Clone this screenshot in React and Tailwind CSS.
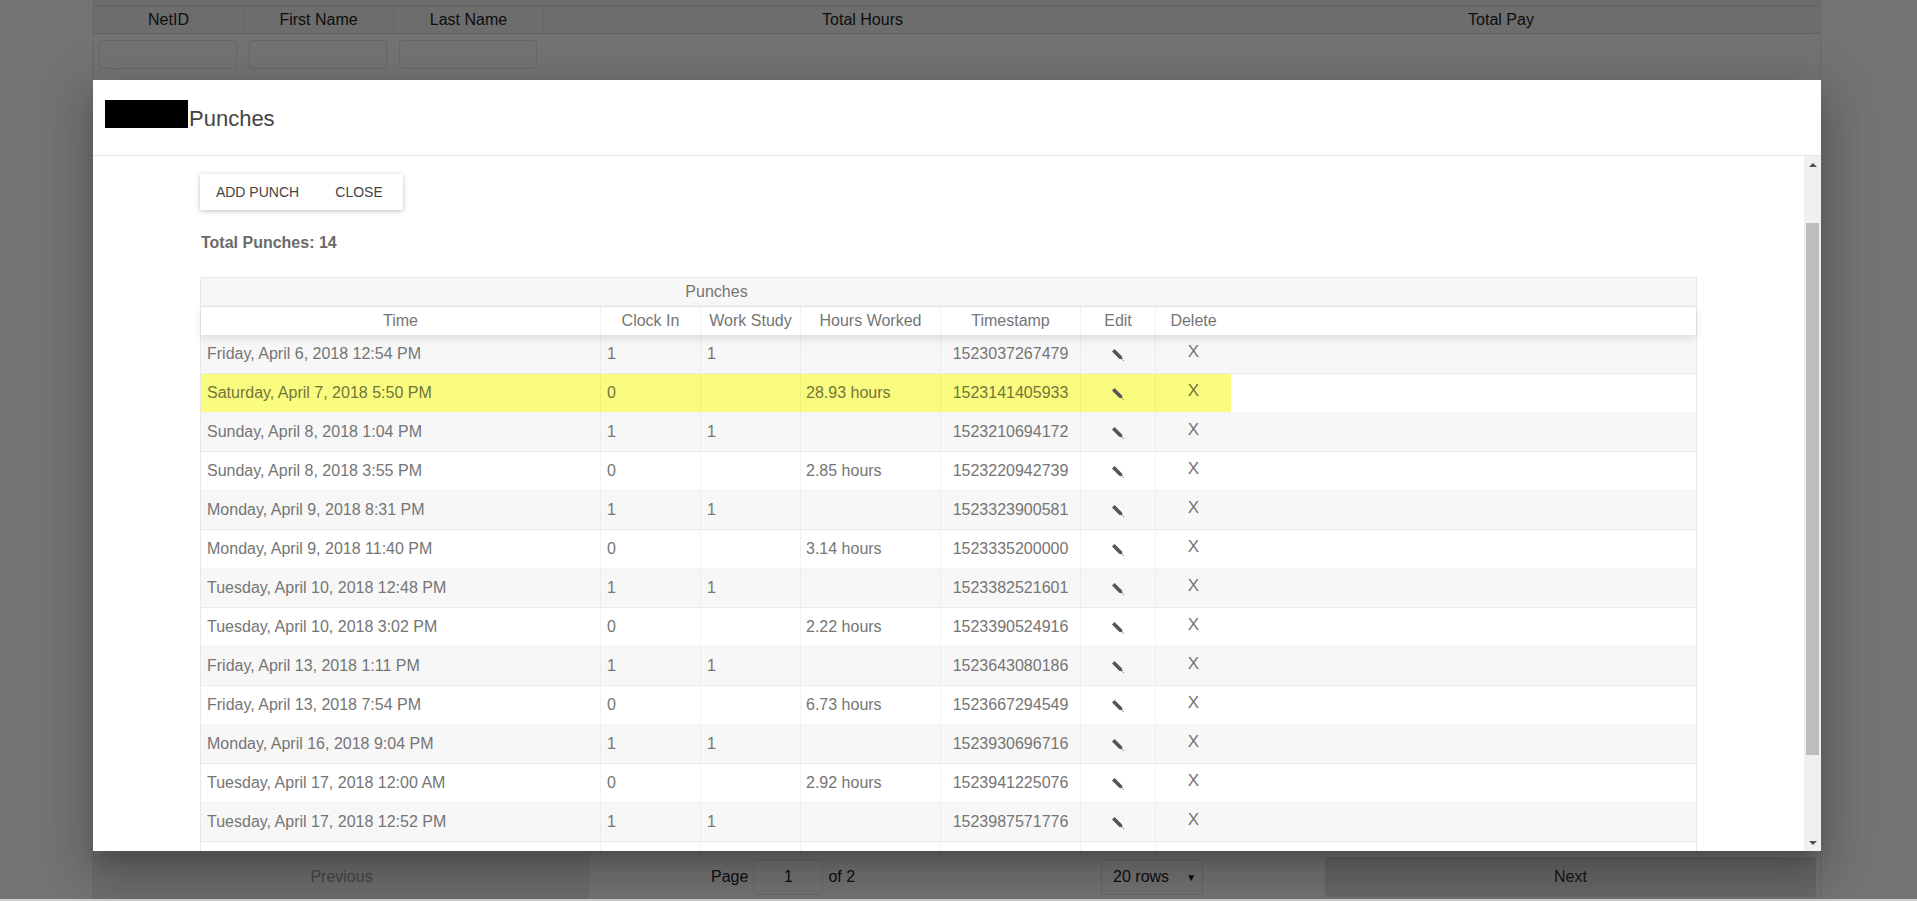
const F = "font-['Liberation_Sans',Arial,sans-serif]";

const rows = [
  ['Friday, April 6, 2018 12:54 PM', '1', '1', '', '1523037267479'],
  ['Saturday, April 7, 2018 5:50 PM', '0', '', '28.93 hours', '1523141405933'],
  ['Sunday, April 8, 2018 1:04 PM', '1', '1', '', '1523210694172'],
  ['Sunday, April 8, 2018 3:55 PM', '0', '', '2.85 hours', '1523220942739'],
  ['Monday, April 9, 2018 8:31 PM', '1', '1', '', '1523323900581'],
  ['Monday, April 9, 2018 11:40 PM', '0', '', '3.14 hours', '1523335200000'],
  ['Tuesday, April 10, 2018 12:48 PM', '1', '1', '', '1523382521601'],
  ['Tuesday, April 10, 2018 3:02 PM', '0', '', '2.22 hours', '1523390524916'],
  ['Friday, April 13, 2018 1:11 PM', '1', '1', '', '1523643080186'],
  ['Friday, April 13, 2018 7:54 PM', '0', '', '6.73 hours', '1523667294549'],
  ['Monday, April 16, 2018 9:04 PM', '1', '1', '', '1523930696716'],
  ['Tuesday, April 17, 2018 12:00 AM', '0', '', '2.92 hours', '1523941225076'],
  ['Tuesday, April 17, 2018 12:52 PM', '1', '1', '', '1523987571776'],
];

const Pencil = () => (
  <svg width="14" height="14" viewBox="0 0 14 14" className="mt-[1px]">
    <path d="M1 3.6 L3.6 1 L10.8 8.2 L11.6 11.6 L8.2 10.8 Z" fill="#555" />
    <path d="M11.8 11.8 L13 13" stroke="#888" strokeWidth="1" />
  </svg>
);

const Cell = ({ w, children, className = 'px-[6px]' }) => (
  <div className={`${w} shrink-0 border-r border-black/5 flex items-center overflow-hidden whitespace-nowrap ${className}`}>
    {children}
  </div>
);

const Row = ({ row, index }) => {
  const highlighted = index === 1;
  const odd = index % 2 === 0;
  return (
    <div className={`flex h-[39px] shrink-0 border-b border-black/5 text-[16px] text-[#757575] ${odd ? 'bg-[#f7f7f7]' : 'bg-white'}`}>
      <div className={`flex ${highlighted ? 'bg-[#f9fc7f] text-[#74753a]' : ''}`}>
        <Cell w="w-[400px]">{row[0]}</Cell>
        <Cell w="w-[100px]">{row[1]}</Cell>
        <Cell w="w-[100px]">{row[2]}</Cell>
        <Cell w="w-[140px]" className="px-[5px]">{row[3]}</Cell>
        <Cell w="w-[140px]" className="justify-center">{row[4]}</Cell>
        <Cell w="w-[75px]" className="justify-center"><Pencil /></Cell>
        <div className="w-[75px] flex justify-center pt-[4px] text-[17px]">X</div>
      </div>
    </div>
  );
};

const HeadCell = ({ w, children }) => (
  <div className={`${w} shrink-0 border-r border-black/5 flex items-center justify-center`}>{children}</div>
);

const App = () => {
  return (
    <div className={`${F} relative h-[901px] w-full overflow-hidden bg-[#cfcfcf]`}>
      {/* page behind the dialog */}
      <div className="bg-white h-[899px]">
        <div className="mx-[93px] h-full w-[1728px] border-x border-black/10 flex flex-col text-[#222]">
          <div className="h-[6px] bg-black/5 border-b border-black/10" />
          <div className="flex h-[28px] shrink-0 bg-black/5 text-[16px] border-b border-black/10">
            <div className="w-[150px] flex items-center justify-center border-r border-black/5">NetID</div>
            <div className="w-[150px] flex items-center justify-center border-r border-black/5">First Name</div>
            <div className="w-[150px] flex items-center justify-center border-r border-black/5">Last Name</div>
            <div className="w-[638px] flex items-center justify-center border-r border-black/5">Total Hours</div>
            <div className="flex-1 flex items-center justify-center">Total Pay</div>
          </div>
          <div className="flex gap-[12px] pl-[5px] pt-[6px]">
            <div className="w-[138px] h-[29px] border border-black/10 rounded-[3px]" />
            <div className="w-[138px] h-[29px] border border-black/10 rounded-[3px]" />
            <div className="w-[138px] h-[29px] border border-black/10 rounded-[3px]" />
          </div>
          <div className="flex-1" />
          <div className="flex h-[45px] items-center text-[16px]">
            <div className="w-[495px] h-full bg-black/5 flex items-center justify-center pt-[1px] text-[#999]">Previous</div>
            <div className="flex-1 flex items-center pt-[1px]">
              <div className="w-[122px]" />
              <span>Page</span>
              <div className="mx-[5px] w-[70px] h-[36px] border border-black/10 rounded-[3px] flex items-center justify-center">1</div>
              <span>of 2</span>
              <div className="ml-[246px] w-[102px] h-[36px] border border-black/10 rounded-[3px] flex items-center justify-between pl-[11px] pr-[6px]">
                <span>20 rows</span>
                <span className="text-[10px]">▼</span>
              </div>
            </div>
            <div className="w-[491px] h-[40px] mr-[4px] bg-black/10 rounded-[3px] flex items-center justify-center text-[#333]">Next</div>
          </div>
        </div>
      </div>

      {/* overlay */}
      <div className="absolute inset-x-0 top-0 h-[899px] bg-black/55" />

      {/* dialog */}
      <div className="absolute left-[93px] top-[80px] w-[1728px] h-[771px] bg-white flex flex-col shadow-[0_11px_15px_-7px_rgba(0,0,0,0.2),0_24px_38px_3px_rgba(0,0,0,0.14),0_9px_46px_8px_rgba(0,0,0,0.12)]">
        <div className="h-[76px] shrink-0 border-b border-[#e3e3e3] flex items-start pl-[12px]">
          <div className="w-[83px] h-[28px] mt-[20px] bg-black mr-[1px]" />
          <span className="mt-[26px] leading-[26px] text-[22px] text-[#444]">Punches</span>
        </div>
        <div className="flex-1 flex min-h-0">
          <div className="flex-1 overflow-hidden pl-[107px] pt-[18px]">
            <div className="flex w-fit h-[36px] rounded-[2px] shadow-[0_1px_5px_rgba(0,0,0,0.25)] text-[14px] text-[#444]">
              <div className="w-[115px] flex items-center justify-center">ADD PUNCH</div>
              <div className="w-[88px] flex items-center justify-center">CLOSE</div>
            </div>
            <div className="mt-[24px] ml-[1px] h-[18px] text-[16px] font-bold text-[#6a6a6a] leading-[18px]">Total Punches: 14</div>
            <div className="mt-[25px] w-[1497px] border-x border-[#e8e8e8] text-[16px] text-[#757575] flex flex-col">
              <div className="h-[30px] border-y border-[#e8e8e8] bg-[#f7f7f7] flex items-center">
                <div className="w-[1031px] text-center">Punches</div>
              </div>
              <div className="flex h-[28px] bg-white relative shadow-[0_3px_10px_rgba(0,0,0,0.12)]">
                <HeadCell w="w-[400px]">Time</HeadCell>
                <HeadCell w="w-[100px]">Clock In</HeadCell>
                <HeadCell w="w-[100px]">Work Study</HeadCell>
                <HeadCell w="w-[140px]">Hours Worked</HeadCell>
                <HeadCell w="w-[140px]">Timestamp</HeadCell>
                <HeadCell w="w-[75px]">Edit</HeadCell>
                <div className="w-[75px] flex items-center justify-center">Delete</div>
              </div>
              {rows.map((row, i) => (
                <Row key={row[4]} row={row} index={i} />
              ))}
              <div className="flex h-[20px] shrink-0">
                <div className="w-[400px] border-r border-black/5" />
                <div className="w-[100px] border-r border-black/5" />
                <div className="w-[100px] border-r border-black/5" />
                <div className="w-[140px] border-r border-black/5" />
                <div className="w-[140px] border-r border-black/5" />
                <div className="w-[75px] border-r border-black/5" />
              </div>
            </div>
          </div>
          {/* scrollbar */}
          <div className="w-[17px] shrink-0 bg-[#f0f0f0] flex flex-col items-center">
            <div className="h-[17px] flex items-center justify-center">
              <div className="w-0 h-0 border-x-[4px] border-x-transparent border-b-[4px] border-b-[#505050]" />
            </div>
            <div className="h-[50px]" />
            <div className="w-[13px] h-[532px] bg-[#bdbdbd]" />
            <div className="flex-1" />
            <div className="h-[17px] flex items-center justify-center">
              <div className="w-0 h-0 border-x-[4px] border-x-transparent border-t-[4px] border-t-[#505050]" />
            </div>
          </div>
        </div>
      </div>
    </div>
  );
};

export default App;
